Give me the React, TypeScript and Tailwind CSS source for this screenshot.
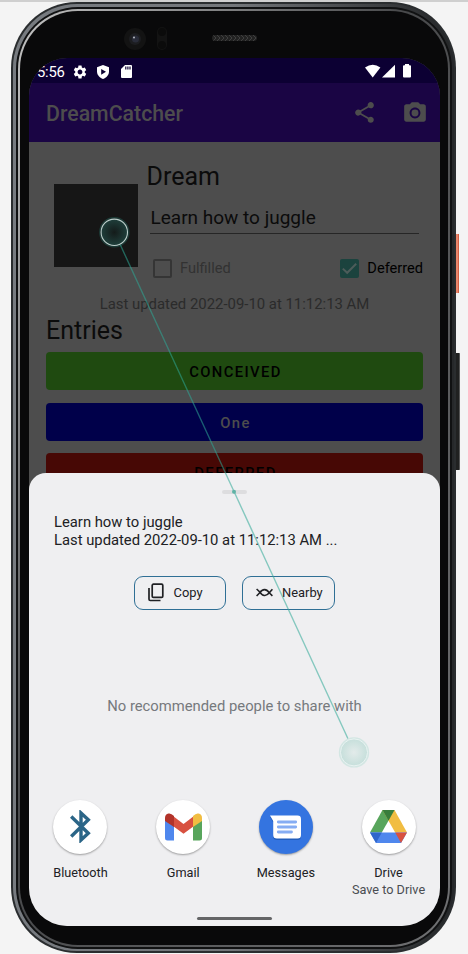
import React from "react";
import { MdSettings, MdShare, MdCameraAlt } from "react-icons/md";

function StatusBar() {
  return (
    <div className="flex h-[25px] items-center bg-[#0c0033] pr-[28px] pl-[8px] text-white">
      <span className="mt-[2px] w-[28px] text-[14.8px] leading-[20px] tracking-[-0.2px] whitespace-nowrap">5:56</span>
      <MdSettings className="mt-[2px] ml-[6.5px] h-[16px] w-[16px]" />
      <svg viewBox="0 0 12 14" className="mt-[2px] ml-[9.5px] h-[14px] w-[12px]">
        <path d="M6 0 12 2.2V6.6C12 10 9.5 13 6 14 2.5 13 0 10 0 6.6V2.2Z" fill="white" />
        <path d="M4.2 3.9 9 6.8 4.2 9.7Z" fill="#0c0033" />
      </svg>
      <svg viewBox="0 0 11 13" className="mt-[2px] ml-[12px] h-[13px] w-[11px]">
        <path d="M4 0H10Q11 0 11 1V12Q11 13 10 13H1Q0 13 0 12V4Z" fill="white" />
        <path d="M4.2 1.6H5.4V4.4H4.2ZM6.3 1.6H7.5V4.4H6.3ZM8.4 1.6H9.6V4.4H8.4Z" fill="#0c0033" />
      </svg>
      <svg viewBox="0 0 47 14" className="mt-[1px] ml-auto h-[14px] w-[47px]">
        <path d="M0 3.6Q7.7-2 15.4 3.6L7.7 13.4Z" fill="white" />
        <path d="M30 .8V13.6H17Z" fill="white" />
        <path d="M40 0H44V1.3H45Q46 1.3 46 2.3V12.6Q46 13.6 45 13.6H39Q38 13.6 38 12.6V2.3Q38 1.3 39 1.3H40Z" fill="white" />
      </svg>
    </div>
  );
}

function AppBar() {
  return (
    <div className="flex h-[59px] items-center bg-[#1a0544] pr-[12px] pl-[17px] text-[#4d4d4d]">
      <span className="mt-[2px] text-[21.3px] leading-[26px] font-medium whitespace-nowrap">DreamCatcher</span>
      <MdShare className="ml-auto h-[25px] w-[25px]" />
      <MdCameraAlt className="ml-[25px] h-[26px] w-[26px]" />
    </div>
  );
}

function DreamForm() {
  return (
    <div className="flex h-[136px] pl-[25px]">
      <div className="mt-[42px] h-[83px] w-[84px] shrink-0 bg-[#161616]" />
      <div className="ml-[8px] w-[277px] pt-[19px]">
        <div className="h-[30px] pl-[0.5px] text-[25px] leading-[31px] text-[#0b0b0b]">Dream</div>
        <div className="ml-[4px] h-[43px] w-[269px] border-b border-[#262626] pt-[16px] pl-[0.5px] text-[19px] leading-[22px] text-[#0b0b0b]">
          Learn how to juggle
        </div>
        <div className="mt-[24px] flex h-[20px] items-center text-[14.6px] leading-[20px]">
          <div className="ml-[7px] h-[19px] w-[19px] rounded-[2px] border-2 border-[#353535]" />
          <span className="ml-[8px] text-[#323232]">Fulfilled</span>
          <svg viewBox="0 0 19 19" className="ml-auto h-[19px] w-[19px]">
            <rect width="19" height="19" rx="2" fill="#1b433e" />
            <path d="M2.8 9.6 7.2 13.8 16.2 4.8" fill="none" stroke="#4d5c5a" strokeWidth="2" />
          </svg>
          <span className="ml-[8px] text-black">Deferred</span>
        </div>
      </div>
    </div>
  );
}

function Entries() {
  return (
    <div className="px-[17px]">
      <div className="mt-[16px] h-[20px] text-center text-[14.9px] leading-[20px] text-[#2b2b2b]">
        Last updated 2022-09-10 at 11:12:13 AM
      </div>
      <div className="mt-[1px] h-[30px] text-[25px] leading-[31px] text-[#0b0b0b]">Entries</div>
      <div className="mt-[7px] flex flex-col gap-[12.5px] text-center text-[14.8px] leading-[40px] font-medium tracking-[1.4px]">
        <div className="h-[38px] rounded-[4px] bg-[#1f4a10] pl-[2px] text-black">CONCEIVED</div>
        <div className="h-[38px] rounded-[4px] bg-[#00004a] pl-[2px] text-[#4d4d4d]">One</div>
        <div className="h-[38px] rounded-[4px] bg-[#470805] pl-[2px] text-black">DEFERRED</div>
      </div>
    </div>
  );
}

function BluetoothIcon() {
  return (
    <svg viewBox="0 0 21 33" className="h-[33px] w-[21px]" fill="none" stroke="#2b6587" strokeWidth="3.400">
      <path d="M1.200 6.500 18.300 23.200 11 30V3L18.300 9.800 1.200 26.500" />
    </svg>
  );
}

function GmailIcon() {
  return (
    <svg viewBox="0 0 37 28" className="h-[28px] w-[37px]">
      <path d="M0 6 9 12V27.500H2.500Q0 27.500 0 25Z" fill="#4f87ed" />
      <path d="M28 12 37 6V25Q37 27.500 34.500 27.500H28Z" fill="#58a55c" />
      <path d="M8 3 18.500 11 29 3V13L18.500 20.800 8 13Z" fill="#d85140" />
      <path d="M28 3Q31 0 33.500 .6 37 1.500 37 5V8L28 14Z" fill="#f1bd42" />
      <path d="M9 3Q6 0 3.500 .6 0 1.500 0 5V8L9 14Z" fill="#b2332a" />
    </svg>
  );
}

function MessagesIcon() {
  return (
    <svg viewBox="0 0 54 54" className="h-[54px] w-[54px]">
      <path d="M11 15.600H38.500Q42 15.600 42 19V35Q42 38.500 38.500 38.500H18Q14.200 38.500 14.200 35V21Z" fill="#1d55ad" transform="translate(0 1.500)" opacity=".7" />
      <path d="M11 15.600H38.500Q42 15.600 42 19V35Q42 38.500 38.500 38.500H18Q14.200 38.500 14.200 35V21Z" fill="white" />
      <path d="M19.300 22H36.700M19.300 27H36.700M19.300 32H32.500" stroke="#86adf3" strokeWidth="2.800" strokeLinecap="round" />
    </svg>
  );
}

function DriveIcon() {
  return (
    <svg viewBox="0 0 37 33" className="h-[33px] w-[37px]">
      <path d="M12.500 0H24.500L11.800 22.500H0Z" fill="#58a55c" />
      <path d="M24.500 0 37 22.500H25.200L18.500 10.800 12.500 0Z" fill="#f1bd42" />
      <path d="M12.500 0H24.500L18.500 10.800Z" fill="#387d3c" />
      <path d="M0 22.500H37L31 33H6Z" fill="#4f87ed" />
      <path d="M0 22.500H11.800L6 33Z" fill="#2f66cc" />
      <path d="M25.200 22.500H37L31 33Z" fill="#d85140" />
    </svg>
  );
}

function Target(props: { label: string; note?: string; blue?: boolean; children: React.ReactNode }) {
  return (
    <div className="flex w-[102.7px] shrink-0 flex-col items-center text-[12.7px] leading-[17px] whitespace-nowrap text-[#202124]">
      <div
        className={
          "flex h-[54px] w-[54px] items-center justify-center rounded-full shadow-[0_1px_2px_rgba(0,0,0,0.35)] " +
          (props.blue ? "bg-[#3474e0]" : "bg-white")
        }
      >
        {props.children}
      </div>
      <span className="mt-[10px]">{props.label}</span>
      {props.note && <span className="text-[#4a4d51]">{props.note}</span>}
    </div>
  );
}

function ShareSheet() {
  return (
    <div className="absolute inset-x-0 bottom-0 flex h-[453px] flex-col rounded-t-[17px] bg-[#efeff1]">
      <div className="mx-auto mt-[17px] h-[4px] w-[25px] rounded-[2px] bg-[#dddddf]" />
      <div className="mt-[20px] ml-[25px] text-[14.8px] leading-[17.5px] text-[#202124]">
        <div>Learn how to juggle</div>
        <div>Last updated 2022-09-10 at 11:12:13 AM ...</div>
      </div>
      <div className="mt-[26.5px] flex justify-center gap-[16px] pr-[1px] text-[12.900px] text-[#202124]">
        <div className="flex h-[34px] w-[92.500px] items-center rounded-[9px] border-[1.200px] border-[#2f6f95] pl-[13px]">
          <svg viewBox="0 0 16 19" className="h-[19px] w-[16px]" fill="none" stroke="#202124" strokeWidth="1.700">
            <rect x="4.200" y="1.200" width="10.600" height="13.200" rx="1.200" />
            <path d="M1 5V16.200Q1 17.500 2.300 17.500H12.500" />
          </svg>
          <span className="mt-[1px] ml-[10px]">Copy</span>
        </div>
        <div className="flex h-[34px] w-[92.500px] items-center rounded-[9px] border-[1.200px] border-[#2f6f95] pl-[13px]">
          <svg viewBox="0 0 17 9" className="h-[9px] w-[17px]" fill="none" stroke="#202124" strokeWidth="1.600">
            <path d="M.6 1 3 3.200Q8.500 11 13.500 4.500L16.400 1.200" />
            <path d="M.6 8 3.500 5Q8.500-2 14 5.500L16.400 7.800" />
          </svg>
          <span className="mt-[1px] ml-[9px]">Nearby</span>
        </div>
      </div>
      <div className="mt-[86px] text-center text-[14.8px] leading-[20px] text-[#76797d]">
        No recommended people to share with
      </div>
      <div className="mt-[84px] flex h-[117px] justify-center">
        <Target label="Bluetooth">
          <BluetoothIcon />
        </Target>
        <Target label="Gmail">
          <GmailIcon />
        </Target>
        <Target label="Messages" blue>
          <MessagesIcon />
        </Target>
        <Target label="Drive" note="Save to Drive">
          <DriveIcon />
        </Target>
      </div>
      <div className="mx-auto h-[3px] w-[75px] rounded-full bg-[#646567]" />
    </div>
  );
}

function GestureTrace() {
  return (
    <svg viewBox="0 0 468 954" className="pointer-events-none absolute inset-0 h-[954px] w-[468px]">
      <defs>
        <radialGradient id="press">
          <stop offset="0" stopColor="#141b1a" />
          <stop offset="1" stopColor="#1f3f3b" />
        </radialGradient>
        <radialGradient id="release">
          <stop offset="0" stopColor="#e3ebea" />
          <stop offset="1" stopColor="#c6dfdb" />
        </radialGradient>
      </defs>
      <path d="M120.300 244.800 234 491.500 348.800 740.500" fill="none" stroke="#2ea896" strokeOpacity=".55" strokeWidth="1.400" />
      <circle cx="234" cy="491.800" r="2" fill="#5fb3a6" />
      <circle cx="114.300" cy="232.300" r="14.500" fill="none" stroke="#2ea896" strokeOpacity=".25" strokeWidth="1.500" />
      <circle cx="114.300" cy="232.300" r="13.200" fill="url(#press)" stroke="#bccfcc" strokeWidth="1.100" />
      <circle cx="354" cy="752.400" r="15.200" fill="#d3e6e3" />
      <circle cx="354" cy="752.400" r="13.500" fill="url(#release)" stroke="#e9f3f2" strokeWidth="1" />
    </svg>
  );
}

function Bezel() {
  return (
    <div className="flex h-[46px] items-start">
      <svg viewBox="0 0 411 46" className="h-[46px] w-[411px]">
        <defs>
          <pattern id="grille" width="4" height="6" patternUnits="userSpaceOnUse" y="23">
            <path d="M0 0 3 3 0 6" fill="none" stroke="#444" strokeWidth=".9" />
          </pattern>
        </defs>
        <circle cx="106" cy="27" r="11" fill="#131313" />
        <circle cx="106" cy="27" r="6" fill="#1c1d20" />
        <circle cx="106.500" cy="27" r="3.500" fill="#292c39" />
        <circle cx="105" cy="25.500" r="1" fill="#b6b9c2" />
        <rect x="128" y="15" width="10" height="23" rx="5" fill="#131313" />
        <circle cx="133" cy="20" r="4" fill="#0b0b0b" />
        <circle cx="133" cy="33" r="4" fill="#0b0b0b" />
        <rect x="183" y="23" width="45" height="6" rx="3" fill="#222" />
        <rect x="183" y="23" width="45" height="6" rx="3" fill="url(#grille)" />
      </svg>
    </div>
  );
}

export default function App() {
  return (
    <div className="relative h-[954px] w-[468px] overflow-hidden border-t-2 border-[#cfcfcf] bg-[#f4f4f4] font-[Roboto,sans-serif]">
      <div className="flex pl-[11px]">
        <div className="h-[951px] w-[445px] rounded-[66px] bg-[#2a2d2f] p-[2px]">
          <div className="h-full rounded-[64px] bg-gradient-to-r from-[#777b80] from-[1%] via-[#74777b] via-[50%] to-[#26282a] to-[98%] p-[2.500px]">
            <div className="h-full rounded-[62px] bg-[#101112] p-[2px]">
              <div className="h-full rounded-[60px] bg-gradient-to-br from-[#c4c4c4] via-[#48494b] via-[45%] to-[#707173] p-[2px]">
                <div className="h-full rounded-[58px] bg-[#09090a] pt-[1.500px] pl-[9.500px]">
                  <Bezel />
                  <div className="relative h-[868px] w-[411px] overflow-hidden rounded-[38px] bg-[#4d4d4d]">
                    <StatusBar />
                    <AppBar />
                    <DreamForm />
                    <Entries />
                    <ShareSheet />
                  </div>
                </div>
              </div>
            </div>
          </div>
        </div>
        <div className="flex w-[4px] flex-col pt-[232px]">
          <div className="h-[59px] w-[3px] border-r border-[#d45f42] bg-[#e9866c]" />
          <div className="mt-[60px] h-[117px] w-[4px] rounded-r-[1px] border-r border-[#555] bg-[#202121]" />
        </div>
      </div>
      <div className="absolute inset-x-0 -top-[2px]">
        <GestureTrace />
      </div>
    </div>
  );
}
